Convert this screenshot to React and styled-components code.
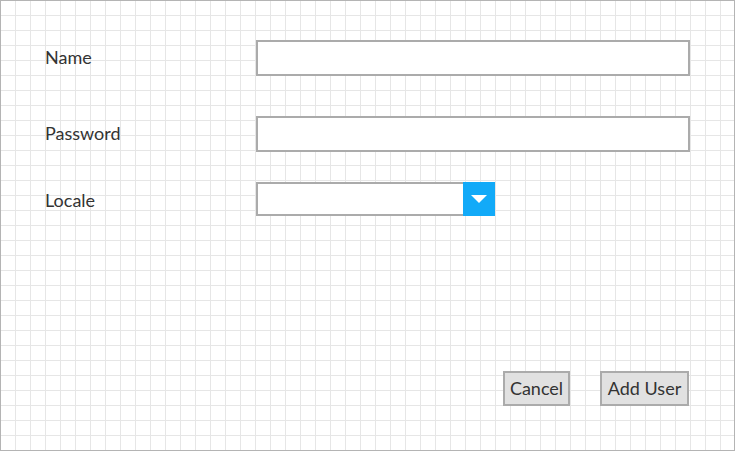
import React from 'react';
import styled, { createGlobalStyle } from 'styled-components';

const GlobalStyle = createGlobalStyle`
  html, body {
    margin: 0;
    padding: 0;
    background: #fff;
  }
  body {
    font-family: Lato, "Open Sans", sans-serif;
    color: #333;
  }
`;

const Canvas = styled.div`
  box-sizing: border-box;
  width: 735px;
  height: 451px;
  border: 1px solid #b4b4b4;
  background-color: #fff;
  background-image:
    linear-gradient(to right, #e6e6e6 1px, transparent 1px),
    linear-gradient(to bottom, #e6e6e6 1px, transparent 1px);
  background-size: 15px 15px;
  background-position: 14px 14px;
  display: flex;
  flex-direction: column;
  padding: 39px 44px 44px 44px;
`;

const Form = styled.div`
  display: flex;
  flex-direction: column;
  flex: 1;
`;

const Row = styled.div`
  display: flex;
  align-items: center;
  margin-top: ${(p) => p.$gap || 0}px;
`;

const Label = styled.label`
  width: 211px;
  font-size: 18px;
  color: #333;
  line-height: 20px;
  padding-bottom: ${(p) => p.$lift || 0}px;
  padding-top: ${(p) => p.$drop || 0}px;
`;

const TextBox = styled.div`
  box-sizing: border-box;
  width: 434px;
  height: 36px;
  border: 2px solid #ababab;
  background: #fff;
`;

const Select = styled.div`
  box-sizing: border-box;
  display: flex;
  width: 239px;
  height: 34px;
`;

const SelectField = styled.div`
  flex: 1;
  border: 2px solid #ababab;
  border-right: none;
  background: #fff;
`;

const SelectButton = styled.div`
  width: 32px;
  background: #12aaf8;
  display: flex;
  align-items: center;
  justify-content: center;
`;

const Actions = styled.div`
  margin-top: auto;
  display: flex;
  justify-content: flex-end;
  gap: 30px;
  padding-right: 1px;
`;

const Button = styled.button`
  box-sizing: border-box;
  height: 35px;
  width: ${(p) => p.$w}px;
  border: 2px solid #ababab;
  background: #e1e1e1;
  font-family: Lato, "Open Sans", sans-serif;
  font-size: 18px;
  color: #333;
  padding: 0 0 2px 0;
  margin: 0;
`;

export default function App() {
  return (
    <>
      <GlobalStyle />
      <Canvas>
        <Form>
          <Row>
            <Label $lift={2}>Name</Label>
            <TextBox />
          </Row>
          <Row $gap={40}>
            <Label $lift={3}>Password</Label>
            <TextBox />
          </Row>
          <Row $gap={30}>
            <Label $drop={1}>Locale</Label>
            <Select>
              <SelectField />
              <SelectButton>
                <svg width="16" height="8" viewBox="0 0 16 8">
                  <path d="M0 0 H16 L8 8 Z" fill="#fff" />
                </svg>
              </SelectButton>
            </Select>
          </Row>
          <Actions>
            <Button $w={67}>Cancel</Button>
            <Button $w={89}>Add User</Button>
          </Actions>
        </Form>
      </Canvas>
    </>
  );
}
